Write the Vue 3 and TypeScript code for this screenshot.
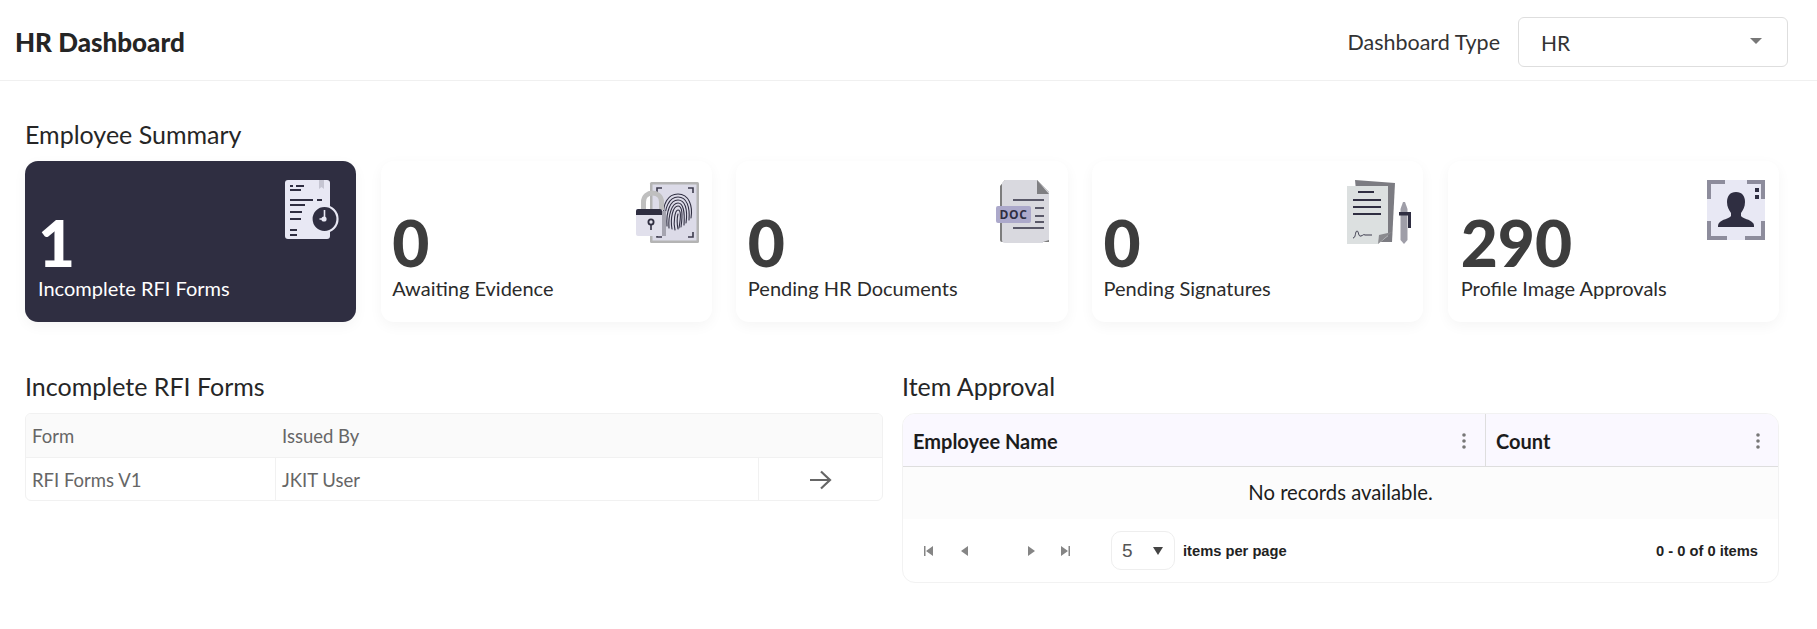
<script setup lang="ts">
interface Card { value: string; label: string; icon: string; active?: boolean }
const cards: Card[] = [
  { value: '1', label: 'Incomplete RFI Forms', icon: 'forms', active: true },
  { value: '0', label: 'Awaiting Evidence', icon: 'evidence' },
  { value: '0', label: 'Pending HR Documents', icon: 'doc' },
  { value: '0', label: 'Pending Signatures', icon: 'sign' },
  { value: '290', label: 'Profile Image Approvals', icon: 'profile' }
]
</script>

<template>
  <div class="page">
    <header class="top">
      <h1>HR Dashboard</h1>
      <div class="type">
        <span class="type-label">Dashboard Type</span>
        <div class="select"><span>HR</span><i class="caret"></i></div>
      </div>
    </header>

    <main class="content">
      <h2 class="summary-title">Employee Summary</h2>
      <section class="cards">
        <article v-for="c in cards" :key="c.label" class="card" :class="[{ active: c.active }, 'c-' + c.icon]">
          <div class="card-text">
            <div class="num">{{ c.value }}</div>
            <div class="label">{{ c.label }}</div>
          </div>

          <svg v-if="c.icon === 'forms'" class="ic" width="55" height="60" viewBox="0 0 55 60">
            <rect x="0" y="0" width="45" height="59" rx="3" fill="#e8e8f4" />
            <path d="M34 0h5v9l-2.500-2-2.500 2z" fill="#c5c5d2" />
            <path d="M5 6h3M11 6h8M5 10h11M5 20h23M32 20h5M5 25h15M5 32h12M5 39h11M5 50h7M5 55h7" stroke="#2f2e41" stroke-width="2" fill="none" />
            <circle cx="39.500" cy="39" r="13" fill="#2f2e41" stroke="#e8e8f4" stroke-width="2.200" />
            <path d="M39.500 30v9h-5" stroke="#e8e8f4" stroke-width="1.600" fill="none" />
            <circle cx="39" cy="39" r="2.600" fill="#e8e8f4" />
          </svg>

          <svg v-else-if="c.icon === 'evidence'" class="ic" width="63" height="61" viewBox="0 0 63 61">
            <rect x="14" y="0" width="49" height="61" rx="1.500" fill="#b4b4b4" />
            <rect x="16.500" y="2.500" width="44" height="56" fill="#dcdbe8" />
            <path d="M21 11V6h5M52 6h5v5M21 50v5h5M52 55h5v-5" stroke="#3c3b4d" stroke-width="1.600" fill="none" />
            <g fill="none" stroke="#2f2e41" stroke-width="1.100" stroke-linecap="round">
              <path d="M28 36C26 22 32 12 42 12C53 12 57 24 55 36" />
              <path d="M29 41C28 26 33 15 42 15C51 15 54 25 53 38" />
              <path d="M31 44C30 30 34 18 42 18C49 18 52 27 50 41" />
              <path d="M33 46C32 33 36 21 42 21C47 21 49 29 48 43" />
              <path d="M36 47C34 36 37 24 42 24C46 24 47 31 45 45" />
              <path d="M39 48C37 40 39 28 42 28C45 28 45 34 43 46" />
              <path d="M42 47C41 42 41 36 42 32" />
            </g>
            <path d="M7.500 28V20c0-12 18-12 18 0v8" fill="none" stroke="#bfbfbf" stroke-width="5" />
            <rect x="0" y="27" width="26" height="27" rx="2" fill="#e1e0ec" />
            <path d="M26 29h4v25h-4z" fill="#a5a4b0" />
            <path d="M0 33v-4a2 2 0 0 1 2-2h22a2 2 0 0 1 2 2v4z" fill="#2f2e41" />
            <circle cx="15" cy="40" r="2.600" fill="none" stroke="#2f2e41" stroke-width="1.800" />
            <path d="M15 43v5" stroke="#2f2e41" stroke-width="1.600" />
          </svg>

          <svg v-else-if="c.icon === 'doc'" class="ic" width="54" height="64" viewBox="0 0 54 64">
            <path d="M9 0h32l12 12v50H6a2 2 0 0 1-2-2V6z" fill="#7d7d7d" />
            <path d="M9 0h32l12 12v48l-6 2v1H9a3 3 0 0 1-3-3V3z" fill="#d9d9df" />
            <path d="M41 0l12 14H41z" fill="#7f7f82" />
            <path d="M17 20h31M17 48h31M39 28h9M39 36h9M39 42h9" stroke="#2f2e41" stroke-width="1.600" />
            <rect x="0" y="26" width="35" height="17" rx="2" fill="#aca9cb" />
            <text x="17.500" y="39" class="doc-text" text-anchor="middle">DOC</text>
          </svg>

          <svg v-else-if="c.icon === 'sign'" class="ic" width="64" height="64" viewBox="0 0 64 64">
            <path d="M8 0l40 3-3 59H14z" fill="#7c7c82" />
            <path d="M0 6h41v50l-10 8H0z" fill="#dce0e0" />
            <path d="M31 64l1-9 13-3z" fill="#8a8a8e" />
            <path d="M11 12h16M6 20h28M6 27h28M6 34h28" stroke="#2f2e41" stroke-width="1.800" />
            <path d="M6 58c3 0 2-7 4-7s1 6 4 5 2-2 4-1h7" fill="none" stroke="#3c3b4d" stroke-width="1" />
            <path d="M53.500 29l2.500-7h2l2.500 7v31l-3.500 4-3.500-4z" fill="#9f9ea8" />
            <path d="M52 32h12v16h-3V35.500h-9z" fill="#2f2e41" />
          </svg>

          <svg v-else class="ic" width="58" height="60" viewBox="0 0 58 60">
            <rect width="58" height="60" fill="#e8e8f4" />
            <path d="M18 2H2v17M40 2h16v17M2 41v17h18M38 58h18V41" fill="none" stroke="#8d8c9c" stroke-width="4" />
            <path d="M48 8h4v4h-4zM48 15h4v4h-4z" fill="#2f2e41" />
            <path d="M29 12c-6 0-9 4-9 10 0 5 2 8 4 11v3c-2 3-9 3-12 7-1 1-1 3-1 4h36c0-2 0-3-1-4-3-4-10-4-12-7v-3c2-3 4-6 4-11 0-6-3-10-9-10z" fill="#2f2e41" />
          </svg>
        </article>
      </section>

      <section class="lower">
        <div class="panel-left">
          <h2>Incomplete RFI Forms</h2>
          <div class="rfi">
            <div class="rfi-head">
              <span>Form</span>
              <span>Issued By</span>
            </div>
            <div class="rfi-row">
              <span class="cell">RFI Forms V1</span>
              <span class="cell">JKIT User</span>
              <span class="cell go">
                <svg width="24" height="20" viewBox="0 0 24 20"><path d="M1 10h20M12 1.500l9 8.500-9 8.500" fill="none" stroke="#666" stroke-width="2.200" /></svg>
              </span>
            </div>
          </div>
        </div>

        <div class="panel-right">
          <h2>Item Approval</h2>
          <div class="grid">
            <div class="grid-head">
              <div class="col">
                <span>Employee Name</span>
                <svg width="4" height="16" viewBox="0 0 4 16"><g fill="#777"><circle cx="2" cy="2" r="1.800" /><circle cx="2" cy="8" r="1.800" /><circle cx="2" cy="14" r="1.800" /></g></svg>
              </div>
              <div class="col">
                <span>Count</span>
                <svg width="4" height="16" viewBox="0 0 4 16"><g fill="#777"><circle cx="2" cy="2" r="1.800" /><circle cx="2" cy="8" r="1.800" /><circle cx="2" cy="14" r="1.800" /></g></svg>
              </div>
            </div>
            <div class="empty">No records available.</div>
            <div class="pager">
              <div class="nav">
                <svg width="9" height="10" viewBox="0 0 9 10"><path d="M0 0h1.500v10H0zM9 0v10L2 5z" fill="#858585" /></svg>
                <svg class="p2" width="8" height="10" viewBox="0 0 8 10"><path d="M8 0v10L1 5z" fill="#858585" /></svg>
                <svg class="p3" width="8" height="10" viewBox="0 0 8 10"><path d="M0 0v10l7-5z" fill="#858585" /></svg>
                <svg class="p4" width="9" height="10" viewBox="0 0 9 10"><path d="M0 0v10l7-5zM7.500 0H9v10H7.500z" fill="#858585" /></svg>
              </div>
              <div class="size"><span>5</span><i class="size-caret"></i></div>
              <span class="pp">items per page</span>
              <span class="total">0 - 0 of 0 items</span>
            </div>
          </div>
        </div>
      </section>
    </main>
  </div>
</template>

<style scoped>
.page { width: 1817px; height: 629px; overflow: hidden; background: #fff; font-family: "Lato", "Open Sans", sans-serif; color: #2b2b2b; }
.top { height: 81px; box-sizing: border-box; border-bottom: 1px solid #f0f0f0; display: flex; align-items: center; justify-content: space-between; padding: 4px 29px 0 15px; }
h1 { margin: 0; font-size: 26px; font-weight: 900; color: #252525; }
.type { display: flex; align-items: center; gap: 18px; }
.type-label { font-size: 21.500px; color: #333; }
.select { width: 270px; height: 50px; box-sizing: border-box; border: 1px solid #dedede; border-radius: 6px; display: flex; align-items: center; justify-content: space-between; padding: 0 25px 0 22px; font-size: 21px; color: #333; }
.caret { width: 0; height: 0; border-left: 6px solid transparent; border-right: 6px solid transparent; border-top: 6px solid #777; margin-top: -3px; }
.content { padding: 37px 38px 0 25px; }
h2 { margin: 0; font-size: 25px; font-weight: 400; color: #262626; line-height: 32px; }
.summary-title { margin-bottom: 11px; }
.cards { display: grid; grid-template-columns: repeat(5, 1fr); gap: 24.400px; }
.card { height: 161px; box-sizing: border-box; border-radius: 13px; background: #fff; box-shadow: 0 4px 14px rgba(0, 0, 0, 0.045); display: flex; justify-content: space-between; align-items: flex-start; padding: 19px 16.300px 0 11.500px; color: #2b2b2b; }
.card.active { background: #2f2e41; color: #fff; padding-left: 13px; }
.card-text { align-self: stretch; display: flex; flex-direction: column; padding-top: 29px; }
.num { font-size: 64px; font-weight: 900; line-height: 68px; color: #3d3d3d; }
.active .num { color: #fff; }
.label { font-size: 20px; line-height: 22px; white-space: nowrap; }
.ic { flex: none; }
.c-evidence { padding-right: 13px; }
.c-evidence .ic { margin-top: 2px; }
.c-doc { padding-right: 17.500px; }
.c-sign { padding-right: 12.500px; }
.c-profile { padding-left: 13px; padding-right: 14px; }
.doc-text { font-family: "Open Sans", sans-serif; font-size: 12px; font-weight: 700; fill: #2f2e41; letter-spacing: 0.6px; }
.lower { display: grid; grid-template-columns: 858px 1fr; gap: 19px; margin-top: 48px; }
.lower h2 { margin-bottom: 11px; }
.rfi { border: 1px solid #f1f1f1; border-radius: 6px; overflow: hidden; height: 88px; box-sizing: border-box; font-size: 18.500px; color: #666; }
.rfi-head { height: 44px; background: #fafafa; border-bottom: 1px solid #f1f1f1; display: grid; grid-template-columns: 250px 1fr; align-items: center; padding-left: 6px; box-sizing: border-box; }
.rfi-row { height: 43px; display: grid; grid-template-columns: 250px 483px 1fr; }
.cell { display: flex; align-items: center; padding-left: 6px; border-right: 1px solid #f1f1f1; }
.go { border-right: 0; padding: 0; justify-content: center; }
.grid { border: 1px solid #f2f2f2; border-radius: 13px; overflow: hidden; height: 170px; box-sizing: border-box; }
.grid-head { height: 53px; box-sizing: border-box; background: #faf8ff; border-bottom: 1px solid #dedede; display: grid; grid-template-columns: 582px 1fr; font-size: 20px; font-weight: 700; color: #1c1c1c; }
.col { display: flex; align-items: center; justify-content: space-between; padding: 1px 19px 0 10px; }
.col + .col { border-left: 1px solid #dedede; padding-right: 18px; }
.empty { height: 52px; box-sizing: border-box; padding-bottom: 2px; background: #fcfcfc; display: flex; align-items: center; justify-content: center; font-size: 20.300px; color: #1c1c1c; }
.pager { height: 63px; display: flex; align-items: center; font-family: "Liberation Sans", Arial, sans-serif; padding: 0 20px 0 21px; }
.nav { display: flex; align-items: center; width: 187px; flex: none; }
.nav .p2 { margin-left: 27px; }
.nav .p3 { margin-left: 60px; }
.nav .p4 { margin-left: 25px; }
.size { width: 64px; height: 39px; box-sizing: border-box; border: 1px solid #eee; border-radius: 10px; display: flex; align-items: center; justify-content: space-between; padding: 0 11px 0 10px; font-size: 19px; color: #555; }
.size-caret { width: 0; height: 0; border-left: 5px solid transparent; border-right: 5px solid transparent; border-top: 8px solid #444; }
.pp { margin-left: 8px; font-size: 14.700px; font-weight: 700; color: #222; }
.total { margin-left: auto; font-size: 14.700px; font-weight: 700; color: #222; }
</style>
